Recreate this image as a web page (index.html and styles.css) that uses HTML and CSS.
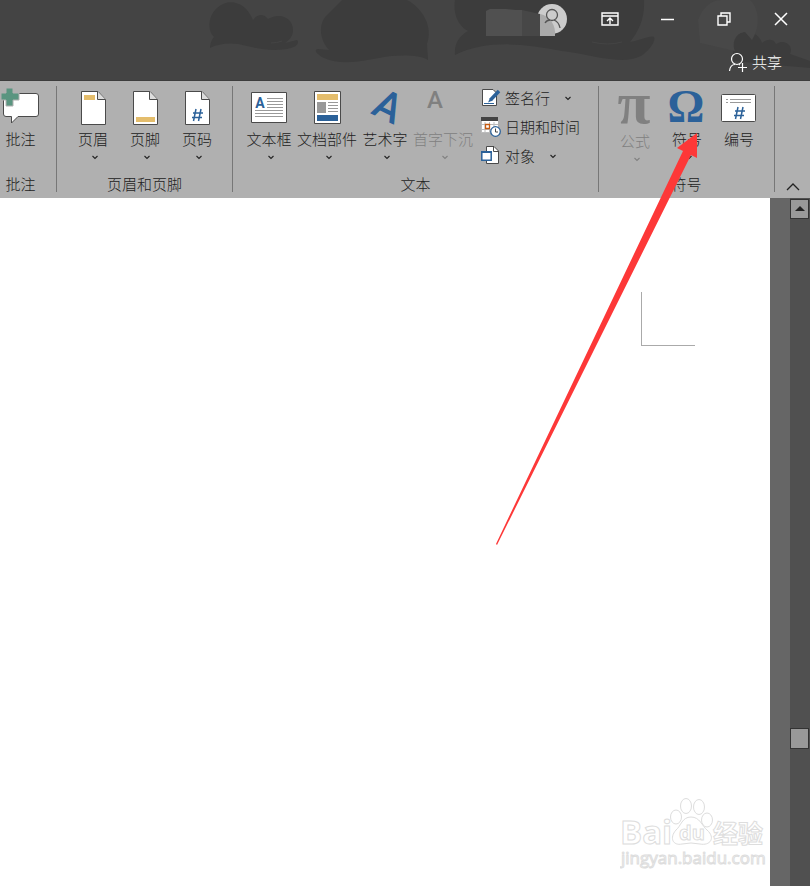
FILE: index.html
```html
<!DOCTYPE html>
<html lang="zh-CN">
<head>
<meta charset="utf-8">
<title>文档</title>
<link rel="stylesheet" href="styles.css">
</head>
<body>
<svg class="defs" aria-hidden="true">
  <symbol id="chev" viewBox="0 0 8 12"><path d="M1.500 5L4 7.500L6.500 5" fill="none" stroke="currentColor" stroke-width="1.100"/></symbol>
  <symbol id="sheet" viewBox="0 0 40 40"><path d="M8.500 3.500H25L32.500 11.500V36.500H8.500Z" fill="#fff" stroke="#4a4a4a"/><path d="M24.500 3.500V11.500H32.500" fill="#ddd" stroke="#4a4a4a"/></symbol>
</svg>
<header class="titlebar">
  <svg class="art" width="810" height="81" viewBox="0 0 810 81" aria-hidden="true">
    <g fill="#3c3c3c">
      <path d="M214 37C207 31 208 16 217 8C229-3 246 2 253 20C258 13 264 14 268 19C280 12 293 18 293 30C293 37 288 41 285 43L297 40C300 43 296 47 291 48C275 52 259 49 247 46C233 42 220 43 210 48C210 44 212 39 214 37Z"/>
      <path d="M329 50C320 40 318 25 326 16L342 0H407C424 9 433 28 427 44L428 60C420 55 405 55 391 56C370 59 344 67 324 58C317 55 313 49 318 49Z"/>
      <path d="M455 0H644C645 18 639 31 630 42C639 41 650 35 654 37C656 41 650 50 641 56C621 66 590 54 562 51C523 43 485 40 455 55C454 44 459 36 468 31C457 25 453 12 455 0Z"/>
      <path d="M733 51C730 40 736 32 747 32C755 32 760 37 762 43C768 38 774 39 776 44C785 38 794 46 790 54L810 61V68L733 61Z"/>
    </g>
    <path d="M698 20C702 9 710 0 721 0H750C759 8 761 26 752 40L745 32C737 32 731 42 735 51L700 43Z" fill="#484848"/>
    <path d="M592 42Q608 46 622 42M271 43Q277 43 282 41" fill="none" stroke="#444"/>
  </svg>
  <div class="caption">
    <svg class="account" width="96" height="38" viewBox="0 0 96 38" role="img" aria-label="账户">
      <circle cx="67" cy="19" r="15" fill="#ccc"/>
      <path d="M1 36V11L5 9H21L31 10H37V36Z" fill="#505050"/><path d="M37 10L55 14V36H37Z" fill="#474747"/>
      <path d="M55 14C65 16 71 25 70 36H55Z" fill="#aaa"/>
      <g fill="none" stroke="#555" stroke-width="1.300"><circle cx="67" cy="15" r="5.500"/><path d="M60 23Q62 20 65 20M69 20Q74 22 75 28"/></g>
    </svg>
    <button class="win" aria-label="功能区显示选项"><svg width="18" height="14" viewBox="0 0 18 14"><path d="M1 1H17V13H1ZM1 4H17M9 12V6M6 9L9 6L12 9" fill="none" stroke="#fff" stroke-width="1.400"/></svg></button>
    <button class="win" aria-label="最小化"><svg width="14" height="14" viewBox="0 0 14 14"><path d="M1 7.500H14" stroke="#fff" stroke-width="1.500"/></svg></button>
    <button class="win" aria-label="还原"><svg width="14" height="14" viewBox="0 0 14 14"><path d="M1 4H10V13H1ZM4 4V1H13V10H10" fill="none" stroke="#fff" stroke-width="1.400"/></svg></button>
    <button class="win" aria-label="关闭"><svg width="14" height="14" viewBox="0 0 14 14"><path d="M1 1L13 13M13 1L1 13" stroke="#fff" stroke-width="1.500"/></svg></button>
  </div>
  <button class="share"><svg width="20" height="20" viewBox="0 0 20 20"><g fill="none" stroke="#fff" stroke-width="1.200"><circle cx="9" cy="7" r="5.500"/><path d="M1.500 19C2 15 4 12.500 7 12.500M11 12.500L12 13M10 15.500H19M14.500 11V20"/></g></svg>共享</button>
</header>

<main>
<nav class="ribbon" aria-label="插入">
  <section class="group comments">
    <div class="tools">
      <button class="tool"><svg width="40" height="40" viewBox="0 0 40 40"><path d="M5.500 5.500H35Q37.500 5.500 37.500 8V26Q37.500 28.500 35 28.500H17L10.500 35V28.500H5Q2.500 28.500 2.500 26V8Z" fill="#fff" stroke="#4a4a4a"/><path d="M5 0H12V5H18V12H12V18H5V12H0V5H5Z" fill="#5a9580" stroke="#b0b0b0"/></svg><span>批注</span></button>
    </div>
    <h2>批注</h2>
  </section>
  <section class="group">
    <div class="tools">
      <button class="tool"><svg width="40" height="40" viewBox="0 0 40 40"><use href="#sheet"/><path d="M11 7H22V12H11Z" fill="#e4bd6c"/></svg><span>页眉</span><svg class="chev" width="8" height="12"><use href="#chev"/></svg></button>
      <button class="tool"><svg width="40" height="40" viewBox="0 0 40 40"><use href="#sheet"/><path d="M11 29H30V34H11Z" fill="#e4bd6c"/></svg><span>页脚</span><svg class="chev" width="8" height="12"><use href="#chev"/></svg></button>
      <button class="tool"><svg width="40" height="40" viewBox="0 0 40 40"><use href="#sheet"/><path d="M19 21L16.500 33M24 21L21.500 33M16 25H26M15 29.500H25" stroke="#2b6199" stroke-width="1.500"/></svg><span>页码</span><svg class="chev" width="8" height="12"><use href="#chev"/></svg></button>
    </div>
    <h2>页眉和页脚</h2>
  </section>
  <section class="group text">
    <div class="tools">
      <button class="tool wide"><svg width="40" height="40" viewBox="0 0 40 40"><path d="M2.500 4.500H37.500V34.500H2.500Z" fill="#fff" stroke="#4a4a4a"/><text class="letter bold" x="11" y="20" font-size="14">A</text><path d="M18 10.500H34M18 13.500H34M18 16.500H34M18 19.500H34M6 22.500H34M6 25.500H34M6 28.500H34" stroke="#999"/></svg><span>文本框</span><svg class="chev" width="8" height="12"><use href="#chev"/></svg></button>
      <button class="tool wide"><svg width="40" height="40" viewBox="0 0 40 40"><path d="M7.500 3.500H33.500V35.500H7.500Z" fill="#fff" stroke="#4a4a4a"/><path d="M10 6H31V12H10Z" fill="#e4bd6c"/><path d="M10 14H19V25H10Z" fill="#999"/><path d="M21 14.500H31M21 17.500H31M21 20.500H31M21 23.500H31" stroke="#999"/><path d="M10 27H31V33H10Z" fill="#2b6199"/></svg><span>文档部件</span><svg class="chev" width="8" height="12"><use href="#chev"/></svg></button>
      <button class="tool wide"><svg width="40" height="40" viewBox="0 0 40 40"><text class="letter" x="17" y="31" font-size="41" transform="rotate(26 17 31)">A</text></svg><span>艺术字</span><svg class="chev" width="8" height="12"><use href="#chev"/></svg></button>
      <button class="tool wide" disabled><svg width="40" height="40" viewBox="0 0 40 40"><text class="letter off" x="12" y="20" font-size="24">A</text></svg><span>首字下沉</span><svg class="chev" width="8" height="12"><use href="#chev"/></svg></button>
      <div class="stack">
        <button class="row"><svg width="20" height="20" viewBox="0 0 20 20"><path d="M1.500 1.500H12L15.500 5V17.500H1.500Z" fill="#fff" stroke="#4a4a4a"/><path d="M18 3L9.500 12" stroke="#2b6199" stroke-width="3.500"/><path d="M9 10L11.500 12.500L7 14.500Z" fill="#2b6199"/><path d="M3 15.500H13" stroke="#2b6199"/></svg><span>签名行</span><svg class="chev" width="8" height="12"><use href="#chev"/></svg></button>
        <button class="row"><svg width="20" height="20" viewBox="0 0 20 20"><path d="M0 0H17V16H0Z" fill="#fff"/><path d="M0 0H17V4H0Z" fill="#444"/><path d="M.500 4V16M4 5V16M0 7.500H17M0 12.500H12M8.500 5V16M13 5V16M0 15.500H12" stroke="#bbb"/><path d="M4.500 7.500H8.500V11.500H4.500Z" fill="#fff" stroke="#c55a11" stroke-width="1.300"/><circle cx="14.500" cy="14.500" r="4.800" fill="#fff" stroke="#2b6199" stroke-width="1.300"/><path d="M14.500 11.500V15H17" fill="none" stroke="#444"/></svg><span>日期和时间</span></button>
        <button class="row"><svg width="20" height="20" viewBox="0 0 20 20"><path d="M5.500 .500H13L17.500 5V17.500H5.500Z" fill="#fff" stroke="#4a4a4a"/><path d="M12.500 .500V5.500H17.500" fill="none" stroke="#4a4a4a"/><path d="M.800 5.800H10.200V14.200H.800Z" fill="#fff" stroke="#2b6199" stroke-width="1.500"/><path d="M0 6H11" stroke="#2b6199" stroke-width="2"/></svg><span>对象</span><svg class="chev" width="8" height="12"><use href="#chev"/></svg></button>
      </div>
    </div>
    <h2>文本</h2>
  </section>
  <section class="group">
    <div class="tools">
      <button class="tool" disabled><svg width="40" height="42" viewBox="0 0 40 42"><text class="greek off" x="19" y="35" font-size="60">π</text></svg><span>公式</span><svg class="chev" width="8" height="12"><use href="#chev"/></svg></button>
      <button class="tool"><svg width="40" height="40" viewBox="0 0 40 40"><text class="greek" x="19" y="34" font-size="46">Ω</text></svg><span>符号</span><svg class="chev" width="8" height="12"><use href="#chev"/></svg></button>
      <button class="tool"><svg width="40" height="40" viewBox="0 0 40 40"><rect x="2.500" y="6.500" width="34" height="27" rx="1" fill="#fff" stroke="#4a4a4a"/><path d="M7 11.500H9M11 11.500H32M7 14.500H9M11 14.500H32" stroke="#999"/><path d="M19 19L16.500 31M24 19L21.500 31M16 23H26M15 27.500H25" stroke="#2b6199" stroke-width="1.500"/></svg><span>编号</span></button>
    </div>
    <h2>符号</h2>
  </section>
  <button class="collapse" aria-label="折叠功能区"><svg width="14" height="10" viewBox="0 0 14 10"><path d="M1 8L7 2L13 8" fill="none" stroke="#222" stroke-width="1.300"/></svg></button>
</nav>
<div class="workspace">
  <article class="page">
    <div class="corner"></div>
    <svg class="watermark" width="150" height="76" viewBox="0 0 150 76" role="img" aria-label="Baidu 经验">
      <g fill="#fff" stroke="#ddd">
        <text x="0" y="48" font-size="33" font-weight="700">Bai</text>
        <ellipse cx="56" cy="21" rx="5.500" ry="7"/><ellipse cx="66" cy="10" rx="5.500" ry="7.500"/><ellipse cx="79" cy="11" rx="5.500" ry="7.500"/><ellipse cx="87" cy="24" rx="5.500" ry="7"/>
        <path d="M71 21C80 21 82 30 87 34C96 42 90 50 80 48Q71 46 62 48C53 50 49 42 56 34C61 30 62 21 71 21Z"/>
        <text x="59" y="44" font-size="20" font-weight="700">du</text>
        <text x="93" y="47" font-size="25" font-weight="700">经验</text>
        <text x="1" y="68" font-size="17">jingyan.baidu.com</text>
      </g>
    </svg>
  </article>
  <div class="scrollbar">
    <button class="up" aria-label="向上滚动"><svg width="10" height="6" viewBox="0 0 10 6"><path d="M0 5L5 0L10 5Z" fill="#222"/></svg></button>
    <div class="before"></div>
    <div class="thumb"></div>
    <div class="after"></div>
  </div>
</div>
</main>
<svg class="pointer" width="210" height="415" viewBox="0 0 210 415" aria-hidden="true"><path d="M202 3L202 28L196 25L2 415L1 414L188 21L182 18Z" fill="#fd3838"/></svg>
</body>
</html>
```
FILE: styles.css
```css
* { box-sizing: border-box; }

body {
  margin: 0;
  min-height: 100vh;
  display: flex;
  flex-direction: column;
  position: relative;
  overflow-x: hidden;
  background: #666;
  color: #222;
  font: 300 15px/22px "Noto Sans CJK SC", sans-serif;
}

button {
  border: 0;
  padding: 0;
  background: none;
  color: inherit;
  font: inherit;
}

svg { display: block; flex: none; }
.defs { position: absolute; width: 0; height: 0; }

.titlebar {
  position: relative;
  height: 81px;
  display: flex;
  flex-direction: column;
  align-items: flex-end;
  background: #444;
  color: #fff;
  border-bottom: 1px solid #3c3c3c;
}
.art { position: absolute; top: 0; right: 0; }
.caption { position: relative; display: flex; height: 38px; padding-right: 1px; }
.win {
  width: 57px;
  display: flex;
  align-items: center;
  justify-content: center;
}
.share {
  position: relative;
  display: flex;
  align-items: center;
  gap: 4px;
  margin: 13px 28px 0 0;
}

main { flex: 1; display: flex; flex-direction: column; }

.ribbon {
  display: flex;
  padding: 5px 0 6px;
  background: #b0b0b0;
}
.group {
  display: flex;
  flex-direction: column;
  border-right: 1px solid #777;
}
.tools {
  display: flex;
  height: 90px;
  padding: 0 9px 0 10px;
}
.comments .tools { padding: 0; }
.comments { padding-right: 15px; }
.text .tools { padding: 0 18px 0 7px; }
.group h2 {
  margin: 0;
  font-size: 15px;
  font-weight: 300;
  line-height: 16px;
  text-align: center;
}
.tool {
  width: 52px;
  padding-top: 2px;
  display: flex;
  flex-direction: column;
  align-items: center;
  white-space: nowrap;
}
.tool svg { overflow: visible; }
.comments .tool { width: 41px; }
.tool.wide { width: 58px; }
.tool .chev { margin: 1px 0 0 4px; }
button:disabled { color: #808080; }
.stack {
  display: flex;
  flex-direction: column;
  gap: 5px;
  margin-left: 9px;
}
.row {
  height: 24px;
  display: flex;
  align-items: center;
  gap: 4px;
  white-space: nowrap;
}
.row .chev { margin-left: 10px; }

.letter, .greek { fill: #2b6199; text-anchor: middle; }
.letter { font-family: Roboto, sans-serif; font-weight: 500; }
.letter.bold { font-weight: 700; }
.greek { font-family: "Liberation Serif", serif; font-weight: 700; }
.off { fill: #808080; }

.collapse {
  margin-left: auto;
  width: 34px;
  display: flex;
  align-items: flex-end;
  justify-content: center;
}

.workspace { flex: 1; display: flex; }
.page {
  flex: 1;
  display: flex;
  flex-direction: column;
  align-items: flex-end;
  background: #fff;
}
.corner {
  width: 54px;
  height: 54px;
  margin: 94px 75px 0 0;
  border-left: 1px solid #aaa;
  border-bottom: 1px solid #aaa;
}
.watermark {
  margin: auto 0 14px;
  font-family: "Open Sans", "Noto Sans CJK SC", sans-serif;
  font-weight: 400;
}
.scrollbar {
  width: 20px;
  margin-left: 20px;
  padding: 1px 1px 0 0;
  display: flex;
  flex-direction: column;
  background: #505050;
}
.up, .thumb {
  height: 21px;
  border: 1px solid #333;
  background: #999;
}
.up {
  height: 20px;
  display: flex;
  align-items: center;
  justify-content: center;
}
.before { flex: 509; }
.after { flex: 137; }

.pointer { position: absolute; left: 495px; top: 130px; pointer-events: none; }
```
